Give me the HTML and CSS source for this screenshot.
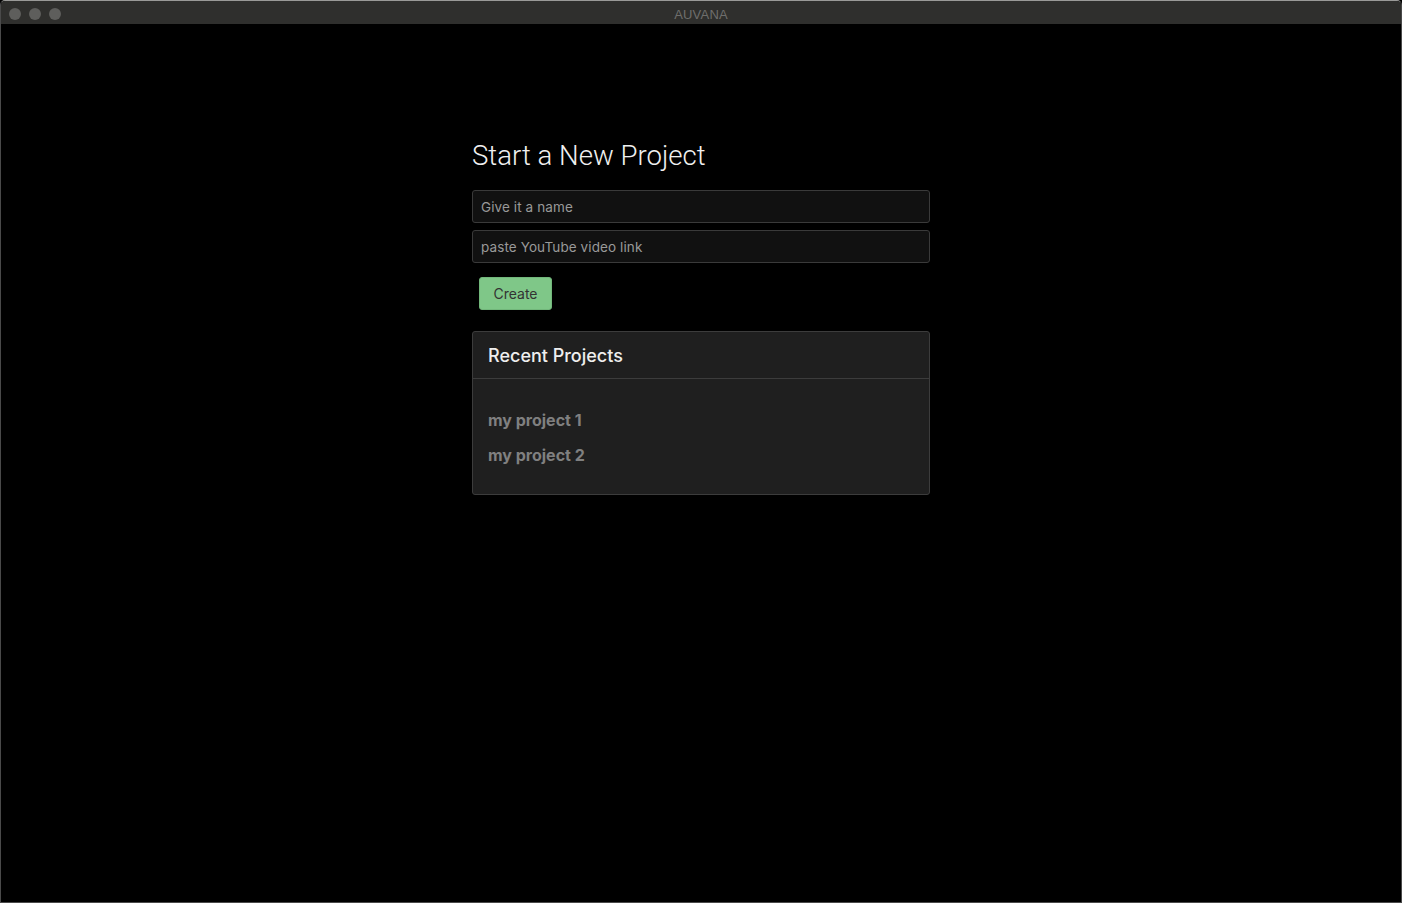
FILE: index.html
```html
<!DOCTYPE html>
<html>
<head>
<meta charset="utf-8">
<link rel="stylesheet" href="styles.css">
</head>
<body>
<div class="window">
  <div class="titlebar">
    <div class="lights"><span class="light"></span><span class="light"></span><span class="light"></span></div>
    <div class="title">AUVANA</div>
  </div>
  <div class="content">
    <div class="column">
      <h1 class="heading">Start a New Project</h1>
      <input class="field" type="text" placeholder="Give it a name">
      <input class="field" type="text" placeholder="paste YouTube video link">
      <div class="actions"><button class="btn-create">Create</button></div>
      <div class="card">
        <div class="card-header">Recent Projects</div>
        <div class="card-body">
          <div class="project">my project 1</div>
          <div class="project">my project 2</div>
        </div>
      </div>
    </div>
  </div>
</div>
</body>
</html>
```
FILE: styles.css
```css
html, body { margin: 0; padding: 0; height: 100%; background: #000; }
body { font-family: Inter, "Noto Sans", sans-serif; }
.window {
  height: 903px;
  box-sizing: border-box;
  display: flex;
  flex-direction: column;
  border: 1px solid #4a4a4a;
  border-top: 1px solid #9a9a98;
  border-radius: 5px 5px 0 0;
  overflow: hidden;
  background: #000;
}
.titlebar {
  height: 23px;
  background: #2f2f2d;
  display: flex;
  align-items: center;
  position: relative;
  flex: none;
}
.lights { display: flex; gap: 8px; padding-left: 8px; padding-top: 2px; }
.light { width: 12px; height: 12px; border-radius: 50%; background: #5e5e5c; }
.title {
  position: absolute; left: 0; right: 0; top: 3px; bottom: 0;
  display: flex; align-items: center; justify-content: center;
  font-family: "Liberation Sans", sans-serif;
  font-size: 13px; color: #6e6e6c; letter-spacing: 0.2px;
}
.content { flex: 1; display: flex; justify-content: center; }
.column { width: 458px; display: flex; flex-direction: column; padding-top: 113px; }
.heading {
  margin: 1px 0 16px 0;
  font-family: Roboto, sans-serif;
  font-weight: 300;
  font-size: 27.6px;
  line-height: 36px;
  color: #f0f0f0;
}
.field {
  box-sizing: border-box;
  height: 33px;
  margin: 0 0 7px 0;
  padding: 0 8px;
  background: #111;
  border: 1px solid #3a3a3a;
  border-radius: 3px;
  font-family: Inter, sans-serif;
  font-size: 13.5px;
  letter-spacing: 0.1px;
  color: #ddd;
  outline: none;
}
.field::placeholder { color: #999; }
.actions { padding: 7px 0 21px 7px; }
.btn-create {
  height: 33px;
  width: 73px;
  background: #7fc788;
  border: 1px solid #72b77b;
  border-radius: 3px;
  font-family: Inter, sans-serif;
  font-size: 14px;
  color: #333;
  padding: 0;
}
.card {
  background: #1f1f1f;
  border: 1px solid #3c3c3c;
  border-radius: 3px;
}
.card-header {
  height: 47px;
  box-sizing: border-box;
  display: flex; align-items: center;
  padding: 0 15px;
  border-bottom: 1px solid #3c3c3c;
  font-size: 18px;
  font-weight: 500;
  color: #eee;
}
.card-body { padding: 29px 15px 27px; display: flex; flex-direction: column; gap: 11px; }
.project { font-size: 16px; font-weight: 700; color: #808080; line-height: 24px; }
```
